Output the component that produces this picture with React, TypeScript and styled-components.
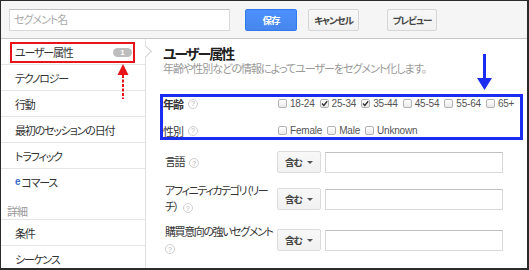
import React from 'react';
import styled, { createGlobalStyle } from 'styled-components';

const GlobalStyle = createGlobalStyle`
  html, body {
    margin: 0;
    padding: 0;
    background: #fff;
  }
  body {
    font-family: "Liberation Sans", "Noto Sans CJK JP", sans-serif;
    font-feature-settings: "palt";
  }
  * {
    box-sizing: border-box;
  }
`;

const Frame = styled.div`
  position: relative;
  width: 529px;
  height: 270px;
  border-style: solid;
  border-color: #2b2b2b;
  border-width: 1px 2px 2px 1px;
  overflow: hidden;
  display: flex;
  flex-direction: column;
  background: #fff;
`;

const TopBar = styled.div`
  flex: none;
  height: 38px;
  display: flex;
  align-items: flex-start;
  padding: 8px 0 0 8px;
  background: #f5f5f5;
  border-bottom: 1px solid #c8c8c8;
`;

const NameInput = styled.input`
  width: 221px;
  height: 22px;
  border: 1px solid #d9d9d9;
  border-top-color: #c0c0c0;
  background: #fff;
  padding: 0 4px;
  font: 11px "Liberation Sans", "Noto Sans CJK JP", sans-serif;
  font-feature-settings: "palt";
  letter-spacing: -1px;
  outline: none;
  &::placeholder {
    color: #aaa;
  }
`;

const Button = styled.button<{ $primary?: boolean; $w: number; $ml: number }>`
  width: ${(p) => p.$w}px;
  height: 22px;
  margin-left: ${(p) => p.$ml}px;
  padding: 0;
  white-space: nowrap;
  border-radius: 2px;
  font: bold 9.5px "Liberation Sans", "Noto Sans CJK JP", sans-serif;
  font-feature-settings: "palt";
  letter-spacing: -1px;
  border: 1px solid ${(p) => (p.$primary ? '#3079ed' : '#d6d6d6')};
  background: ${(p) =>
    p.$primary ? 'linear-gradient(#4d90fe, #4787ed)' : 'linear-gradient(#f8f8f8, #f1f1f1)'};
  color: ${(p) => (p.$primary ? '#fff' : '#444')};
`;

const Body = styled.div`
  flex: 1;
  display: flex;
  min-height: 0;
`;

const Sidebar = styled.div`
  flex: none;
  width: 145px;
  border-right: 1px solid #e2e2e2;
  position: relative;
  z-index: 1;
`;

const NavItem = styled.div<{ $active?: boolean; $noLine?: boolean }>`
  position: relative;
  height: 26px;
  display: flex;
  align-items: center;
  padding-left: 14px;
  font-size: 11px;
  letter-spacing: -1.2px;
  white-space: nowrap;
  color: #333;
  border-bottom: 1px solid ${(p) => (p.$noLine ? 'transparent' : '#e5e5e5')};
  ${(p) =>
    p.$active &&
    `
    &::after {
      content: '';
      position: absolute;
      right: -5px;
      top: 8px;
      width: 8px;
      height: 8px;
      background: #fff;
      border-top: 1px solid #d0d0d0;
      border-right: 1px solid #d0d0d0;
      transform: rotate(45deg);
    }
  `}
`;

const Badge = styled.span`
  position: absolute;
  left: 112px;
  top: 9px;
  width: 19px;
  height: 9px;
  border-radius: 5px;
  background: #bdbdbd;
  color: #fff;
  font-size: 8px;
  font-weight: bold;
  letter-spacing: 0;
  line-height: 9px;
  text-align: center;
`;

const ELetter = styled.span`
  color: #3a6cc8;
  font-weight: bold;
  font-size: 10px;
  margin-right: 2px;
`;

const SectionLabel = styled.div`
  height: 25px;
  display: flex;
  align-items: flex-end;
  padding: 0 0 0 6px;
  font-size: 11px;
  line-height: 13px;
  letter-spacing: -1px;
  color: #999;
  border-bottom: 1px solid #e5e5e5;
`;

const Main = styled.div`
  flex: 1;
  padding: 7px 4px 0 14px;
`;

const Title = styled.h2`
  margin: 0 0 0 3px;
  font-size: 14px;
  line-height: 16px;
  letter-spacing: -2px;
  font-weight: bold;
  color: #222;
`;

const Subtitle = styled.p`
  margin: 0 0 0 3px;
  font-size: 11px;
  line-height: 14px;
  letter-spacing: -1px;
  white-space: nowrap;
  color: #999;
`;

const HighlightBox = styled.div`
  margin-top: 18px;
  width: 363px;
  border: 3px solid #1b2df0;
  display: flex;
  flex-direction: column;
  gap: 14px;
  padding: 0;
`;

const AttrRow = styled.div`
  height: 13px;
  display: flex;
  align-items: center;
`;

const AttrLabel = styled.div<{ $bold?: boolean }>`
  width: 115px;
  flex: none;
  display: flex;
  align-items: center;
  font-size: 11px;
  letter-spacing: -1px;
  color: #333;
  font-weight: ${(p) => (p.$bold ? 'bold' : 'normal')};
`;

const CheckGroup = styled.div`
  display: flex;
  gap: 5px;
  white-space: nowrap;
`;

const CheckItem = styled.label`
  display: flex;
  align-items: center;
  gap: 3px;
  font-size: 10px;
  letter-spacing: -0.2px;
  color: #555;
  white-space: nowrap;
`;

const Box = styled.span`
  flex: none;
  width: 9px;
  height: 9px;
  border: 1px solid #b3b3b3;
  border-radius: 2px;
  background: linear-gradient(#fff, #e9e9e9);
  display: flex;
  align-items: center;
  justify-content: center;
`;

const Help = styled.span<{ $noGap?: boolean }>`
  display: inline-flex;
  align-items: center;
  justify-content: center;
  width: 10px;
  height: 10px;
  margin-left: ${(p) => (p.$noGap ? 0 : 5)}px;
  border: 1px solid #cfcfcf;
  border-radius: 50%;
  color: #b0b0b0;
  font-size: 7px;
  font-weight: normal;
  letter-spacing: 0;
  vertical-align: middle;
  line-height: 1;
`;

const FormRow = styled.div<{ $mt: number }>`
  display: flex;
  align-items: center;
  margin-top: ${(p) => p.$mt}px;
  padding-left: 5px;
`;

const FormLabel = styled.div`
  width: 110px;
  flex: none;
  font-size: 11px;
  line-height: 16px;
  letter-spacing: -1.4px;
  white-space: nowrap;
  color: #333;
`;

const Dropdown = styled.div`
  width: 44px;
  height: 22px;
  margin-left: 2px;
  display: flex;
  align-items: center;
  justify-content: space-between;
  padding: 0 7px;
  border: 1px solid #dcdcdc;
  border-radius: 2px;
  background: linear-gradient(#f8f8f8, #f1f1f1);
  font-size: 9.5px;
  letter-spacing: -1px;
  font-weight: bold;
  color: #444;
`;

const Caret = styled.span`
  width: 0;
  height: 0;
  border-left: 3px solid transparent;
  border-right: 3px solid transparent;
  border-top: 3px solid #555;
`;

const TextField = styled.div`
  width: 178px;
  height: 21px;
  margin-left: 4px;
  border: 1px solid #d9d9d9;
  border-top-color: #c0c0c0;
  background: #fff;
`;

const Overlay = styled.svg`
  position: absolute;
  left: -1px;
  top: -1px;
  width: 529px;
  height: 270px;
  pointer-events: none;
  z-index: 5;
`;

const ages = [
  { label: '18-24', checked: false },
  { label: '25-34', checked: true },
  { label: '35-44', checked: true },
  { label: '45-54', checked: false },
  { label: '55-64', checked: false },
  { label: '65+', checked: false },
];

const genders = ['Female', 'Male', 'Unknown'];

const Check: React.FC<{ checked?: boolean; label: string }> = ({ checked, label }) => (
  <CheckItem>
    <Box>
      {checked && (
        <svg width="7" height="7" viewBox="0 0 7 7">
          <path d="M1 3.6 L2.8 5.4 L6.2 1.2" fill="none" stroke="#333" strokeWidth="1.4" />
        </svg>
      )}
    </Box>
    {label}
  </CheckItem>
);

const App: React.FC = () => {
  return (
    <>
      <GlobalStyle />
      <Frame>
        <TopBar>
          <NameInput placeholder="セグメント名" />
          <Button $primary $w={52} $ml={15}>保存</Button>
          <Button $w={51} $ml={11}>キャンセル</Button>
          <Button $w={50} $ml={28}>プレビュー</Button>
        </TopBar>
        <Body>
          <Sidebar>
            <NavItem $active>
              ユーザー属性
              <Badge>1</Badge>
            </NavItem>
            <NavItem>テクノロジー</NavItem>
            <NavItem>行動</NavItem>
            <NavItem>最初のセッションの日付</NavItem>
            <NavItem>トラフィック</NavItem>
            <NavItem $noLine>
              <ELetter>e</ELetter>コマース
            </NavItem>
            <SectionLabel>詳細</SectionLabel>
            <NavItem>条件</NavItem>
            <NavItem>シーケンス</NavItem>
          </Sidebar>
          <Main>
            <Title>ユーザー属性</Title>
            <Subtitle>年齢や性別などの情報によってユーザーをセグメント化します。</Subtitle>
            <HighlightBox>
              <AttrRow>
                <AttrLabel $bold>
                  年齢<Help>?</Help>
                </AttrLabel>
                <CheckGroup>
                  {ages.map((a) => (
                    <Check key={a.label} label={a.label} checked={a.checked} />
                  ))}
                </CheckGroup>
              </AttrRow>
              <AttrRow>
                <AttrLabel>
                  性別<Help>?</Help>
                </AttrLabel>
                <CheckGroup>
                  {genders.map((g) => (
                    <Check key={g} label={g} />
                  ))}
                </CheckGroup>
              </AttrRow>
            </HighlightBox>
            <FormRow $mt={11}>
              <FormLabel>
                言語<Help>?</Help>
              </FormLabel>
              <Dropdown>
                含む<Caret />
              </Dropdown>
              <TextField />
            </FormRow>
            <FormRow $mt={10}>
              <FormLabel>
                アフィニティカテゴリ（リー
                <br />
                チ）<Help>?</Help>
              </FormLabel>
              <Dropdown>
                含む<Caret />
              </Dropdown>
              <TextField />
            </FormRow>
            <FormRow $mt={9}>
              <FormLabel>
                購買意向の強いセグメント
                <br />
                <Help $noGap>?</Help>
              </FormLabel>
              <Dropdown>
                含む<Caret />
              </Dropdown>
              <TextField />
            </FormRow>
          </Main>
        </Body>
        <Overlay viewBox="0 0 529 270">
          <rect x="11" y="43" width="123" height="19" fill="none" stroke="#e8141a" strokeWidth="2" />
          <polygon points="123,64 117.5,75 128.5,75" fill="#e8141a" />
          <line x1="123" y1="75" x2="123" y2="99" stroke="#e8141a" strokeWidth="2" strokeDasharray="3 1.5" />
          <line x1="484.5" y1="54" x2="484.5" y2="79" stroke="#1b2df0" strokeWidth="3" />
          <polygon points="477,78 492,78 484.5,90" fill="#1b2df0" />
        </Overlay>
      </Frame>
    </>
  );
};

export default App;
